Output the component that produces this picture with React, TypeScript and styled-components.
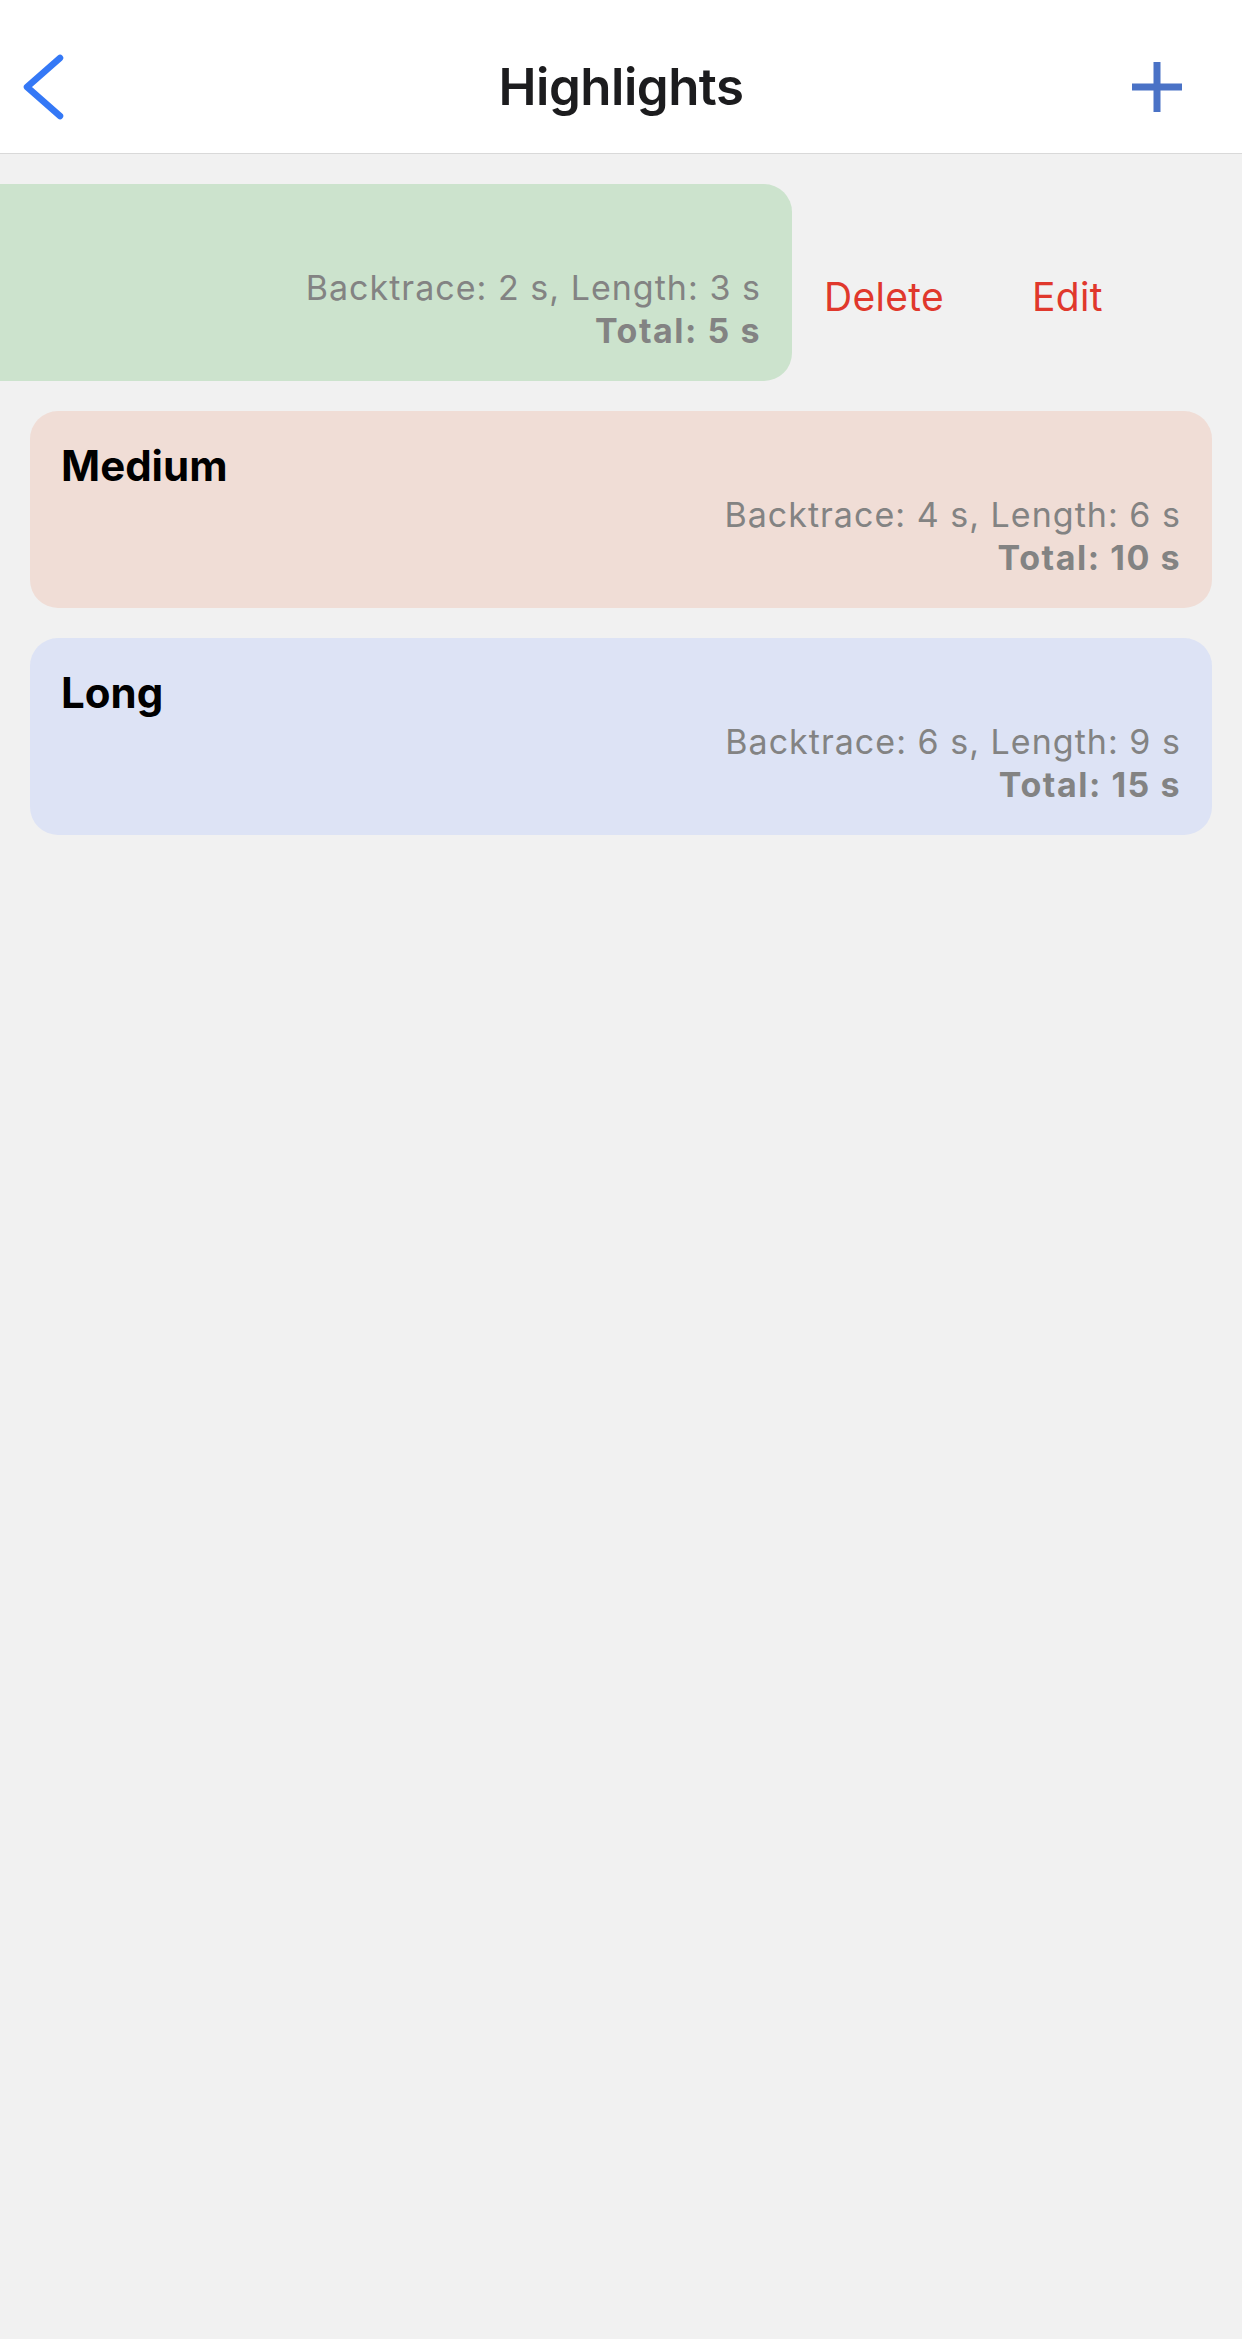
import React from "react";
import styled, { createGlobalStyle } from "styled-components";

const GlobalStyle = createGlobalStyle`
  html, body {
    margin: 0;
    padding: 0;
    background: #f1f1f1;
    font-family: Inter, "Noto Sans", "Liberation Sans", sans-serif;
    overflow-x: hidden;
  }
  #root {
    min-height: 100vh;
    background: #f1f1f1;
  }
`;

const Page = styled.div`
  min-height: 100vh;
  display: flex;
  flex-direction: column;
  overflow: hidden;
`;

const Header = styled.header`
  box-sizing: border-box;
  height: 154px;
  padding-top: 22px;
  background: #ffffff;
  border-bottom: 1.5px solid #d9d9d9;
`;

const NavRow = styled.div`
  height: 130px;
  display: grid;
  grid-template-columns: 1fr auto 1fr;
  align-items: center;
  padding: 0 20px;
`;

const NavButton = styled.button<{ $align: "start" | "end" }>`
  justify-self: ${(p) => p.$align};
  display: flex;
  align-items: center;
  background: none;
  border: 0;
  padding: 0;
  margin: 0 ${(p) => (p.$align === "end" ? "40px" : "0")} 0 0;
  cursor: pointer;
`;

const Title = styled.h1`
  margin: 0;
  font-size: 51px;
  font-weight: 600;
  line-height: 1.2;
  color: #1c1c1e;
  letter-spacing: -0.5px;
`;

const List = styled.div`
  display: flex;
  flex-direction: column;
  gap: 30px;
  padding: 30px 30px;
`;

const SwipeRow = styled.div`
  display: flex;
  align-items: stretch;
`;

const Card = styled.div<{ $bg: string; $offset?: number }>`
  box-sizing: border-box;
  flex: 0 0 100%;
  margin-left: ${(p) => (p.$offset ? `-${p.$offset}px` : "0")};
  background: ${(p) => p.$bg};
  border-radius: 28px;
  padding: 30px 31px 29px 31px;
  display: flex;
  flex-direction: column;
`;

const CardTitle = styled.div`
  font-size: 42px;
  font-weight: 700;
  line-height: 50px;
  color: #000000;
  margin-bottom: 2px;
`;

const Detail = styled.div<{ $bold?: boolean }>`
  align-self: flex-end;
  font-size: 34px;
  line-height: 43px;
  font-weight: ${(p) => (p.$bold ? 700 : 400)};
  letter-spacing: ${(p) => (p.$bold ? "0.045em" : "0.03em")};
  color: #838383;
  white-space: nowrap;
`;

const Actions = styled.div`
  flex: 0 0 auto;
  display: flex;
  align-items: center;
  gap: 88px;
  padding: 30px 0 0 32px;
`;

const ActionButton = styled.button`
  background: none;
  border: 0;
  padding: 0;
  font-family: inherit;
  font-size: 39px;
  font-weight: 400;
  line-height: 1.2;
  letter-spacing: 0.3px;
  color: #e0382c;
  cursor: pointer;
`;

type Highlight = {
  name: string;
  backtrace: number;
  length: number;
  bg: string;
  swiped?: boolean;
};

const highlights: Highlight[] = [
  { name: "Short", backtrace: 2, length: 3, bg: "#cce3cd", swiped: true },
  { name: "Medium", backtrace: 4, length: 6, bg: "#f0ddd6" },
  { name: "Long", backtrace: 6, length: 9, bg: "#dde3f5" },
];

const BackIcon = () => (
  <svg width="50" height="80" viewBox="0 0 50 80" aria-hidden="true">
    <path
      d="M40 11 L7 40 L40 69"
      fill="none"
      stroke="#3478f6"
      strokeWidth="6.5"
      strokeLinecap="round"
      strokeLinejoin="round"
    />
  </svg>
);

const PlusIcon = () => (
  <svg width="50" height="50" viewBox="0 0 50 50" aria-hidden="true">
    <path d="M0 25 H50 M25 0 V50" fill="none" stroke="#4a72c6" strokeWidth="7" />
  </svg>
);

function HighlightCard({ h }: { h: Highlight }) {
  return (
    <Card $bg={h.bg} $offset={h.swiped ? 420 : 0}>
      {/* the swiped card's title is scrolled out of view */}
      <CardTitle>{h.swiped ? "\u00a0" : h.name}</CardTitle>
      <Detail>
        Backtrace: {h.backtrace} s, Length: {h.length} s
      </Detail>
      <Detail $bold>Total: {h.backtrace + h.length} s</Detail>
    </Card>
  );
}

export default function App() {
  return (
    <>
      <GlobalStyle />
      <Page>
        <Header>
          <NavRow>
            <NavButton $align="start" aria-label="Back">
              <BackIcon />
            </NavButton>
            <Title>Highlights</Title>
            <NavButton $align="end" aria-label="Add">
              <PlusIcon />
            </NavButton>
          </NavRow>
        </Header>
        <List>
          {highlights.map((h) =>
            h.swiped ? (
              <SwipeRow key={h.name}>
                <HighlightCard h={h} />
                <Actions>
                  <ActionButton>Delete</ActionButton>
                  <ActionButton>Edit</ActionButton>
                </Actions>
              </SwipeRow>
            ) : (
              <HighlightCard key={h.name} h={h} />
            )
          )}
        </List>
      </Page>
    </>
  );
}
